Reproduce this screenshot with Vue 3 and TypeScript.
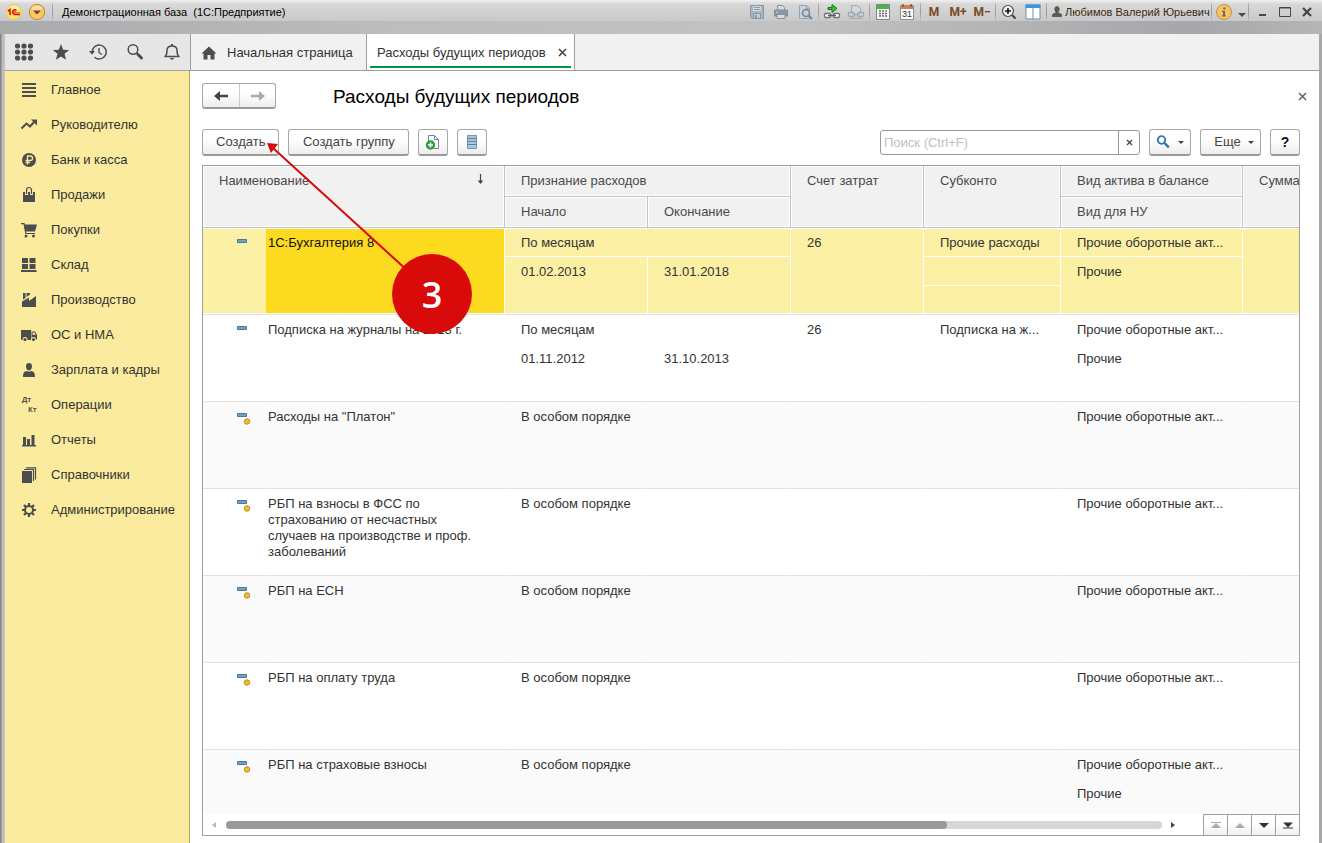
<script setup lang="ts">
import { ref } from 'vue'

interface Entry {
  name: string
  special: boolean
  method: string
  start?: string
  end?: string
  account?: string
  sub?: string
  kind: string
  tax?: string
}

const menu = [
  'Главное', 'Руководителю', 'Банк и касса', 'Продажи', 'Покупки', 'Склад', 'Производство',
  'ОС и НМА', 'Зарплата и кадры', 'Операции', 'Отчеты', 'Справочники', 'Администрирование',
]

const asset = 'Прочие оборотные акт...'
const entries: Entry[] = [
  { name: '1С:Бухгалтерия 8', special: false, method: 'По месяцам', start: '01.02.2013', end: '31.01.2018', account: '26', sub: 'Прочие расходы', kind: asset, tax: 'Прочие' },
  { name: 'Подписка на журналы на 2013 г.', special: false, method: 'По месяцам', start: '01.11.2012', end: '31.10.2013', account: '26', sub: 'Подписка на ж...', kind: asset, tax: 'Прочие' },
  { name: 'Расходы на "Платон"', special: true, method: 'В особом порядке', kind: asset },
  { name: 'РБП на взносы в ФСС по страхованию от несчастных случаев на производстве и проф. заболеваний', special: true, method: 'В особом порядке', kind: asset },
  { name: 'РБП на ЕСН', special: true, method: 'В особом порядке', kind: asset },
  { name: 'РБП на оплату труда', special: true, method: 'В особом порядке', kind: asset },
  { name: 'РБП на страховые взносы', special: true, method: 'В особом порядке', kind: asset, tax: 'Прочие' },
]

const selected = ref(0)
const query = ref('')
</script>

<template>
  <div class="window">
    <header class="titlebar">
      <svg class="logo" width="16" height="16" viewBox="0 0 16 16">
        <circle cx="8" cy="8" r="7.500" fill="#fbe36a" stroke="#e9c95a" />
        <ellipse cx="8" cy="4.500" rx="5" ry="3" fill="#fdf2a8" />
        <path d="M2 7l2-1.500V11" fill="none" stroke="#d8140c" stroke-width="1.600" />
        <path d="M10.500 6.500A2.300 2.300 0 1 0 8.600 10.400H14" fill="none" stroke="#d8140c" stroke-width="1.500" />
        <path d="M9.600 7.800A.9.900 0 1 0 8.800 8.800H14" fill="none" stroke="#d8140c" stroke-width=".8" />
      </svg>
      <button class="plain" aria-label="Меню">
        <svg width="18" height="18" viewBox="0 0 18 18">
          <circle cx="9" cy="9" r="7.700" fill="#f8c763" stroke="#c08a38" />
          <ellipse cx="9" cy="5.500" rx="5.500" ry="3" fill="#fbdc9b" />
          <path d="M5 7.500h8L9 11.500z" fill="#6d4a14" />
        </svg>
      </button>
      <i class="sep"></i>
      <span class="caption">Демонстрационная база&nbsp; (1С:Предприятие)</span>
      <div class="sys">
        <button class="tool" aria-label="Сохранить">
          <svg width="16" height="16" viewBox="0 0 16 16"><path d="M1.500 1.500h13v13h-12l-1-1z" fill="#a9b5c0" stroke="#8796a4" /><path d="M4 2h8v5H4z" fill="#d3d9de" /><path d="M5 3.500h6M5 5.500h6" stroke="#8d9aa6" /><path d="M4.500 9.500h7v5h-7z" fill="#c5cdd4" stroke="#8796a4" /><path d="M6 11h2v3H6z" fill="#8796a4" /></svg>
        </button>
        <button class="tool" aria-label="Печать">
          <svg width="16" height="16" viewBox="0 0 16 16"><path d="M4.500 6V1.500h5l2 2V6" fill="#d6dadd" stroke="#8593a0" /><path d="M1.500 6h13v6h-13z" fill="#8c9aa8" stroke="#7f8e9b" /><path d="M4 10.500h8v4H4z" fill="#d9dde0" stroke="#8593a0" /><path d="M3 8h2" stroke="#c9d1d8" /></svg>
        </button>
        <button class="tool" aria-label="Предварительный просмотр">
          <svg width="16" height="16" viewBox="0 0 16 16"><path d="M2.500 1.500h7l3 3v10h-10z" fill="#ccd2d7" stroke="#97a5b1" /><path d="M9.500 1.500v3h3" fill="none" stroke="#97a5b1" /><circle cx="9" cy="9" r="3.500" fill="#c5d1da" stroke="#71879a" stroke-width="1.600" /><path d="M11.500 11.500l3.500 3.500" stroke="#71879a" stroke-width="2.200" /></svg>
        </button>
        <i class="sep"></i>
        <button class="tool" aria-label="Получить ссылку">
          <svg width="18" height="16" viewBox="0 0 18 16"><path d="M5 3h4V0l5 4-5 4V5H5z" transform="translate(0 .500)" fill="#35c22b" stroke="#187b18" /><rect x="1.500" y="9.500" width="6" height="4" rx="1" fill="#fff" stroke="#6c7379" stroke-width="1.300" /><rect x="10.500" y="9.500" width="6" height="4" rx="1" fill="#fff" stroke="#6c7379" stroke-width="1.300" /><path d="M5 11.500h8" stroke="#555d63" stroke-width="1.500" /></svg>
        </button>
        <button class="tool" aria-label="Перейти по ссылке">
          <svg width="18" height="16" viewBox="0 0 18 16"><path d="M4.500 9V1.500h6l3 3V9" fill="#d4d8dc" stroke="#a0abb5" /><rect x="1.500" y="8.500" width="6" height="4" rx="1" fill="#cdd3d8" stroke="#9da9b3" stroke-width="1.300" /><rect x="10.500" y="8.500" width="6" height="4" rx="1" fill="#cdd3d8" stroke="#9da9b3" stroke-width="1.300" /><path d="M5 10.500h8M3 14.500h12" stroke="#9da9b3" /></svg>
        </button>
        <i class="sep"></i>
        <button class="tool" aria-label="Калькулятор">
          <svg width="14" height="16" viewBox="0 0 14 16"><path d="M.5.500h13v15H.5z" fill="#f6f6f6" stroke="#7b8780" /><path d="M1 1h12v4H1z" fill="#45b649" /><path d="M3 7h2M6 7h2M3 9.500h2M6 9.500h2M3 12h2M6 12h2M9 9.500h2M9 12h2" stroke="#616e78" stroke-width="1.500" /><path d="M9 7h2" stroke="#e2533f" stroke-width="1.500" /></svg>
        </button>
        <button class="tool" aria-label="Календарь">
          <svg width="14" height="16" viewBox="0 0 14 16"><path d="M.5 1.500h13v14H.5z" fill="#fdfdfd" stroke="#8a8f96" /><path d="M1 1h12v4H1z" fill="#c98352" /><path d="M3 0v3M11 0v3" stroke="#8b5731" stroke-width="1.500" /><text x="7" y="13" text-anchor="middle" font-size="9" font-family="Liberation Sans, sans-serif" fill="#333">31</text></svg>
        </button>
        <i class="sep"></i>
        <button class="tool mem">M</button>
        <button class="tool mem">M+</button>
        <button class="tool mem">M−</button>
        <i class="sep"></i>
        <button class="tool" aria-label="Масштаб">
          <svg width="16" height="16" viewBox="0 0 16 16"><circle cx="7" cy="7" r="5.500" fill="#f7f7f7" stroke="#4a4a4a" stroke-width="1.200" /><path d="M4 7h6M7 4v6" stroke="#111" stroke-width="1.600" /><path d="M11 11l3.500 3.500" stroke="#444" stroke-width="2.200" /></svg>
        </button>
        <button class="tool" aria-label="Панели">
          <svg width="16" height="16" viewBox="0 0 16 16"><path d="M1 1h14v14H1z" fill="#fff" stroke="#6d8fae" /><path d="M.5.500h15v3.500H.5z" fill="#3d95dc" /><path d="M8 4v11" stroke="#6d8fae" /></svg>
        </button>
        <i class="sep"></i>
        <button class="user">
          <svg width="10" height="12" viewBox="0 0 10 12"><path d="M5 .5c3 0 2.500 4.500 1 5.500v1l3 1q.6.300.6 2.500H.4Q.4 8.300 1 8l3-1V6C2.500 5 2 .500 5 .500z" fill="#5b5b5b" stroke="#474747" stroke-width=".7" /></svg>
          Любимов Валерий Юрьевич
        </button>
        <i class="sep"></i>
        <button class="plain info" aria-label="Справка">
          <svg width="18" height="18" viewBox="0 0 18 18"><circle cx="9" cy="9" r="7.500" fill="#f6c263" stroke="#c3924b" /><path d="M8.300 4.500h2.200v2H8.300zM7 7.700h3v4.500h1v1.300H7v-1.300h1V9H7z" fill="#756a58" /></svg>
        </button>
        <button class="plain down" aria-label="Настройки">
          <svg width="10" height="8" viewBox="0 0 10 8"><path d="M1 3h8L5 7z" fill="#4c4c4c" /></svg>
        </button>
        <i class="sep gap"></i>
        <button class="wbtn" aria-label="Свернуть"><svg width="12" height="12" viewBox="0 0 12 12"><path d="M2 9h7" stroke="#454545" stroke-width="2" /></svg></button>
        <button class="wbtn" aria-label="Развернуть"><svg width="12" height="12" viewBox="0 0 12 12"><path d="M.5 1.500h11v9H.5z" fill="none" stroke="#454545" /><path d="M.5 2h11" stroke="#454545" /></svg></button>
        <button class="wbtn" aria-label="Закрыть"><svg width="12" height="12" viewBox="0 0 12 12"><path d="M2 2l8 8M10 2l-8 8" stroke="#454545" stroke-width="2.200" /></svg></button>
      </div>
    </header>

    <div class="tabs">
      <div class="quick">
        <button aria-label="Меню функций"><svg width="18" height="18" viewBox="0 0 18 18" fill="#4d4d4d"><template v-for="r in 3" :key="r"><circle v-for="c in 3" :key="c" :cx="c * 6.500 - 4" :cy="r * 6 - 3" r="2.600" /></template></svg></button>
        <button aria-label="Избранное"><svg width="18" height="18" viewBox="0 0 18 18"><path d="M9 1l2.200 5.700 6 .3-4.700 3.800 1.600 5.900L9 13.400l-5.100 3.300 1.600-5.900L.8 7l6-.3z" fill="#4d4d4d" /></svg></button>
        <button aria-label="История"><svg width="18" height="18" viewBox="0 0 18 18" fill="none" stroke="#4d4d4d"><path d="M3.200 9.500a7 7 0 1 1 2.300 4.700" stroke-width="1.500" /><path d="M10 5v4.500l3 2" stroke-width="1.400" /><path d="M0 8h6l-3 3.800z" fill="#4d4d4d" stroke="none" /></svg></button>
        <button aria-label="Поиск"><svg width="18" height="18" viewBox="0 0 18 18" fill="none" stroke="#4d4d4d"><circle cx="7" cy="6.500" r="4.800" stroke-width="1.500" /><path d="M10.500 10l1.500 1.500" stroke-width="1.600" /><path d="M12 11.500l3.500 3.500" stroke-width="3" stroke-linecap="round" /></svg></button>
        <button aria-label="Оповещения"><svg width="18" height="18" viewBox="0 0 18 18"><path d="M2 13.500c2-1.500 2-3 2-6 0-3 2-4.500 5-4.500s5 1.500 5 4.500c0 3 0 4.500 2 6z" fill="none" stroke="#4d4d4d" stroke-width="1.500" stroke-linejoin="round" /><path d="M8 1h2v2H8zM7 15h4c0 2-4 2-4 0z" fill="#4d4d4d" /></svg></button>
      </div>
      <a class="tab" href="#">
        <svg width="16" height="14" viewBox="0 0 16 14"><path d="M8 .5L.5 7.500h2V13.500H6.500V9h3v4.500h4V7.500h2z" fill="#4d4d4d" /></svg>
        Начальная страница
      </a>
      <a class="tab active" href="#">
        Расходы будущих периодов
        <svg width="9" height="9" viewBox="0 0 9 9"><path d="M1 1l7 7M8 1L1 8" stroke="#444" stroke-width="1.600" /></svg>
      </a>
    </div>

    <div class="body">
      <nav class="side">
        <a v-for="(m, i) in menu" :key="m" href="#">
          <svg width="16" height="16" viewBox="0 0 16 16" fill="#4d4d4d">
            <path v-if="i === 0" d="M1 1h14v2H1zM1 5h14v2H1zM1 9h14v2H1zM1 13h14v2H1z" />
            <g v-else-if="i === 1"><path d="M.5 11.500l5-5 3.500 3 4.500-5" fill="none" stroke="#4d4d4d" stroke-width="2" /><path d="M10 2.500h6v6z" /></g>
            <g v-else-if="i === 2"><circle cx="8" cy="8" r="7" /><path d="M6.500 12.500V4h2.800a2.200 2.200 0 0 1 0 4.500H4.500M4.500 10.500H9" fill="none" stroke="#faeb9e" stroke-width="1.300" /></g>
            <g v-else-if="i === 3"><path d="M2 5h12v10H2z" /><path d="M5.500 8V3.500q0-3 2.500-3t2.500 3V8" fill="none" stroke="#faeb9e" stroke-width="3" /><path d="M5.500 7V3.500q0-3 2.500-3t2.500 3V7" fill="none" stroke="#4d4d4d" stroke-width="1.200" /></g>
            <g v-else-if="i === 4"><path d="M0 1h3.500l.4 1.500H16L14 9.500H5l.3 1.500H14v1H4.300L2.500 2.200H0z" /><circle cx="5" cy="14" r="1.500" /><circle cx="12.500" cy="14" r="1.500" /></g>
            <path v-else-if="i === 5" d="M1 1h6v5H1zM8.500 1h6v5h-6zM1 7h6v5H1zM8.500 7h6v5h-6zM0 13h15.500v2H0z" />
            <path v-else-if="i === 6" d="M1 15V9.500l7-4v3.500l7-5V15zM2 1h2.500v5L2 7.500zM5.500 1H9v1.500L5.500 5z" />
            <g v-else-if="i === 7"><path d="M0 3h10v10H0zM10.500 4.500h3.500L16 8v4.500h-5.500z" /><path d="M11.500 5.500h2l1.200 2.300h-3.200z" fill="#faeb9e" /><circle cx="4" cy="12.500" r="2.500" fill="#faeb9e" /><circle cx="12.500" cy="12.500" r="2.500" fill="#faeb9e" /><circle cx="4" cy="12.500" r="1.600" /><circle cx="12.500" cy="12.500" r="1.600" /></g>
            <path v-else-if="i === 8" d="M8 1c2.200 0 3.200 1.500 3 3.700C10.800 7 9.500 8.500 8 8.500S5.200 7 5 4.700C4.800 2.500 5.800 1 8 1zM2 15c0-4 1-5.500 4-6q2 1.300 4 0c3 .5 4 2 4 6z" />
            <g v-else-if="i === 9" font-family="Open Sans, sans-serif" font-weight="700" font-size="7"><text x="1" y="5">Дт</text><text x="7" y="15">Кт</text></g>
            <path v-else-if="i === 10" d="M1 13h14v1.500H1zM2 5h3v8H2zM6 7h3v6H6zM10.500 3h3v10h-3z" />
            <g v-else-if="i === 11"><path d="M1 4h10v12H1z" /><path d="M3 2.500h9.500V14M5 .8h9.500V12.500" fill="none" stroke="#4d4d4d" stroke-width="1.200" /></g>
            <g v-else><circle cx="8" cy="8" r="4" fill="none" stroke="#4d4d4d" stroke-width="2" /><path d="M8 1v3M8 12v3M1 8h3M12 8h3M3 3l2.200 2.200M10.800 10.800L13 13M13 3l-2.200 2.200M5.200 10.800L3 13" stroke="#4d4d4d" stroke-width="2.200" /></g>
          </svg>
          {{ m }}
        </a>
      </nav>

      <main class="page">
        <div class="heading">
          <div class="history">
            <button aria-label="Назад"><svg width="16" height="12" viewBox="0 0 16 12"><path d="M1 6l6-5v3.800h8v2.400H7V11z" fill="#444" /></svg></button>
            <button aria-label="Вперед"><svg width="16" height="12" viewBox="0 0 16 12"><path d="M15 6L9 1v3.800H1v2.400h8V11z" fill="#aaa" /></svg></button>
          </div>
          <h1>Расходы будущих периодов</h1>
          <button class="close" aria-label="Закрыть форму"><svg width="9" height="9" viewBox="0 0 9 9"><path d="M1 1l7 7M8 1L1 8" stroke="#555" stroke-width="1.300" /></svg></button>
        </div>

        <div class="commands">
          <button class="btn">Создать</button>
          <button class="btn group">Создать группу</button>
          <button class="btn icon" aria-label="Скопировать">
            <svg width="16" height="16" viewBox="0 0 16 16"><path d="M3.500 7V1.500h6l4 4v9H9" fill="#fff" stroke="#71869a" /><path d="M9.500 1.500v4h4" fill="none" stroke="#71869a" /><circle cx="5.500" cy="11" r="4.700" fill="#2c9c3c" /><path d="M3 11h5M5.500 8.500v5" stroke="#fff" stroke-width="1.500" /></svg>
          </button>
          <button class="btn icon" aria-label="Режим просмотра">
            <svg width="12" height="16" viewBox="0 0 12 16"><path d="M1.500 1.500h9v13h-9z" fill="#a9c6da" stroke="#7796ad" /><path d="M1 4.500h10M1 7.500h10M1 10.500h10" stroke="#5f86a4" /></svg>
          </button>
          <div class="search">
            <input v-model="query" type="text" aria-label="Поиск" placeholder="Поиск (Ctrl+F)" />
            <button aria-label="Очистить" @click="query = ''"><svg width="7" height="7" viewBox="0 0 7 7"><path d="M1 1l5 5M6 1L1 6" stroke="#444" stroke-width="1.200" /></svg></button>
          </div>
          <button class="btn find" aria-label="Найти">
            <svg width="14" height="14" viewBox="0 0 14 14" fill="none" stroke="#2d76ae"><circle cx="5.500" cy="5" r="3.800" stroke-width="1.800" /><path d="M8.500 8l4.300 4.300" stroke-width="2.400" /></svg>
            <svg width="6" height="3" viewBox="0 0 6 3"><path d="M0 0h6L3 3z" fill="#444" /></svg>
          </button>
          <button class="btn more">Еще <svg width="6" height="3" viewBox="0 0 6 3"><path d="M0 0h6L3 3z" fill="#444" /></svg></button>
          <button class="btn help">?</button>
        </div>

        <section class="list">
          <div class="viewport">
            <table>
              <colgroup><col class="c-icon" /><col class="c-name" /><col class="c-date" /><col class="c-date" /><col class="c-acc" /><col class="c-sub" /><col class="c-kind" /><col /></colgroup>
              <thead>
                <tr>
                  <th colspan="2" rowspan="2"><span class="sorted">Наименование <svg width="7" height="12" viewBox="0 0 7 12"><path d="M3.500 1v9" stroke="#444" stroke-width="1.200" /><path d="M.7 7.500h5.600L3.500 11z" fill="#444" /></svg></span></th>
                  <th colspan="2">Признание расходов</th>
                  <th rowspan="2">Счет затрат</th>
                  <th rowspan="2">Субконто</th>
                  <th>Вид актива в балансе</th>
                  <th rowspan="2">Сумма</th>
                </tr>
                <tr><th>Начало</th><th>Окончание</th><th>Вид для НУ</th></tr>
              </thead>
              <tbody v-for="(e, i) in entries" :key="e.name" :class="{ selected: i === selected }" @click="selected = i">
                <tr>
                  <td rowspan="3" class="mark end">
                    <svg width="14" height="14" viewBox="0 0 14 14"><path d="M.5 1.500h9v3h-9z" fill="#6fa3c8" stroke="#4c7796" /><circle v-if="e.special" cx="10" cy="9.500" r="2.700" fill="#f3c02c" stroke="#b98a1c" /></svg>
                  </td>
                  <td rowspan="3" class="name end">{{ e.name }}</td>
                  <td colspan="2" class="top">{{ e.method }}</td>
                  <td rowspan="3" class="top end">{{ e.account }}</td>
                  <td class="top">{{ e.sub }}</td>
                  <td class="top">{{ e.kind }}</td>
                  <td rowspan="3" class="top end"></td>
                </tr>
                <tr>
                  <td rowspan="2" class="end">{{ e.start }}</td>
                  <td rowspan="2" class="end">{{ e.end }}</td>
                  <td></td>
                  <td rowspan="2" class="end">{{ e.tax }}</td>
                </tr>
                <tr><td class="end"></td></tr>
              </tbody>
            </table>
          </div>
          <footer class="scroll">
            <svg width="6" height="8" viewBox="0 0 6 8"><path d="M5 1v6L1 4z" fill="#bbb" /></svg>
            <div class="track"><div class="thumb"></div></div>
            <svg width="6" height="8" viewBox="0 0 6 8"><path d="M1 1v6l4-3z" fill="#444" /></svg>
            <div class="jump">
              <button aria-label="В начало"><svg width="10" height="8" viewBox="0 0 10 8"><path d="M0 1.500h10" stroke="#aaa" /><path d="M5 2l5 5H0z" fill="#aaa" /></svg></button>
              <button aria-label="Вверх"><svg width="10" height="8" viewBox="0 0 10 8"><path d="M5 2l5 5H0z" fill="#aaa" /></svg></button>
              <button aria-label="Вниз"><svg width="10" height="8" viewBox="0 0 10 8"><path d="M5 7L0 2h10z" fill="#333" /></svg></button>
              <button aria-label="В конец"><svg width="10" height="8" viewBox="0 0 10 8"><path d="M5 6.500L0 1.500h10z" fill="#333" /><path d="M0 7h10" stroke="#333" /></svg></button>
            </div>
          </footer>
        </section>
      </main>
    </div>

    <svg class="callout" width="480" height="340" viewBox="0 0 480 340">
      <path d="M273 148L432 293" stroke="#d80a0a" stroke-width="2" />
      <path d="M267 143l11 1-7 9z" fill="#d80a0a" />
      <circle cx="432" cy="294" r="40" fill="#d80a0a" />
      <text x="432" y="308" text-anchor="middle">3</text>
    </svg>
  </div>
</template>

<style>
html, body, #app { height: 100%; }
body { margin: 0; }
</style>

<style scoped>
* { box-sizing: border-box; }
.window {
  position: relative;
  display: flex;
  flex-direction: column;
  height: 100%;
  padding: 0 3px 0 5px;
  overflow: hidden;
  background: linear-gradient(90deg, #858585 1px, #bcbcbc 2px, #c2c2c2 5px, #b5b5b5 50%, #a8a8a8);
  color: #333;
  font: 13px/16px "Liberation Sans", Arial, sans-serif;
}
button { margin: 0; padding: 0; border: 0; background: none; color: inherit; font: inherit; }
svg { display: block; flex: none; }
a { color: inherit; text-decoration: none; }

.titlebar {
  display: flex;
  align-items: center;
  flex: none;
  height: 34px;
  margin: 0 -3px 0 -5px;
  padding: 1px 4px 11px 6px;
  background: linear-gradient(#f0f0f0 0, #d8d8d8 4px, #c9c9c9 21px, transparent 21px), linear-gradient(90deg, #a9aaae, #bdbdbd 30%, #c2c2c2 60%, #a6a7ab 90%, #b5b5b5);
  font: 11px/14px "Liberation Sans", Arial, sans-serif;
}
.plain { display: flex; }
.titlebar > .plain { margin: 0 5px 0 6px; }
.sep { flex: none; width: 1px; height: 18px; margin: 0 1px; background: linear-gradient(#b4b4b4, #989898, #c4c4c4); }
.caption { margin-left: 8px; color: #000; white-space: nowrap; }
.sys { display: flex; align-items: center; margin-left: auto; }
.tool { display: flex; align-items: center; justify-content: center; width: 24px; height: 22px; }
.mem { color: #7c4a22; font-family: Roboto, sans-serif; font-size: 12px; font-weight: 700; }
.user { display: flex; align-items: center; gap: 3px; width: 162px; padding-left: 4px; color: #3d2a10; white-space: nowrap; }
.info { margin: 0 4px 0 2px; }
.down { padding-top: 4px; }
.gap { margin-right: 3px; }
.wbtn { display: flex; align-items: center; justify-content: center; width: 22px; height: 22px; }

.tabs { display: flex; flex: none; height: 37px; border-bottom: 1px solid #a0a0a0; background: #f1f1f1; }
.quick { display: flex; flex: none; width: 186px; background: #e6e6e6; border-right: 1px solid #a0a0a0; }
.quick button { display: flex; flex: 1; align-items: center; justify-content: center; }
.tab { display: flex; align-items: center; gap: 10px; width: 176px; padding: 1px 0 0 10px; border-right: 1px solid #a0a0a0; white-space: nowrap; }
.tab.active { justify-content: space-between; width: 208px; padding: 1px 7px 0 10px; background: linear-gradient(#009646, #009646) center 32px / calc(100% - 6px) 2px no-repeat #fff; }

.body { display: flex; flex: 1; min-height: 0; }
.side { flex: none; width: 185px; padding-top: 1px; background: #faeb9e; border-right: 1px solid #b8a53c; }
.side a { display: flex; align-items: center; gap: 14px; height: 35px; padding-left: 16px; }
.side svg { overflow: visible; }
.page { display: flex; flex-direction: column; flex: 1; min-width: 0; padding: 12px 19px 7px 12px; background: #fff; }

.heading { display: flex; align-items: center; height: 26px; }
.history { display: flex; height: 26px; border: 1px solid #a8a8a8; border-bottom: 2px solid #9a9a9a; border-radius: 3px; background: linear-gradient(#fff 40%, #ededed); }
.history button { display: flex; align-items: center; justify-content: center; width: 36px; }
.history button + button { border-left: 1px solid #ccc; }
h1 { margin: 0 auto 0 57px; padding-top: 2px; color: #000; font-size: 19px; font-weight: 400; line-height: 24px; }
.close { margin-right: -7px; padding: 0; }

.commands { display: flex; align-items: center; gap: 9px; margin: 20px 0 9px; }
.btn { display: flex; align-items: center; justify-content: center; height: 27px; padding: 0 13px; border: 1px solid #a8a8a8; border-bottom: 2px solid #9a9a9a; border-radius: 3px; background: linear-gradient(#fff 40%, #ededed); color: #444; white-space: nowrap; }
.group { width: 121px; padding: 0; }
.icon, .help { width: 30px; padding: 0; }
.search { display: flex; flex: none; width: 260px; height: 25px; margin-left: auto; border: 1px solid #999; border-radius: 3px; }
.search input { flex: 1; min-width: 0; padding: 0 3px; border: 0; outline: 0; background: none; color: #333; font: inherit; }
.search input::placeholder { color: #c0c0c0; opacity: 1; }
.search button { display: flex; align-items: center; justify-content: center; width: 21px; border-left: 1px solid #999; }
.find { gap: 8px; width: 42px; padding: 0; }
.more { gap: 7px; width: 61px; padding: 0 0 0 7px; }
.help { color: #111; font-size: 14px; font-weight: 700; }

.list { display: flex; flex-direction: column; flex: 1; min-height: 0; border: 1px solid #a0a0a0; }
.viewport { flex: 1; min-height: 0; overflow: hidden; }
table { width: 110%; table-layout: fixed; border-spacing: 0; }
.c-icon { width: 63px; }
.c-name { width: 239px; }
.c-date { width: 143px; }
.c-acc { width: 133px; }
.c-sub { width: 137px; }
.c-kind { width: 182px; }
th { height: 31px; padding: 7px 16px 0; border: 0 solid #c4c4c4; border-width: 0 1px 1px 0; background: #f1f1f1; box-shadow: inset 0 0 0 1px #fff; color: #4a4a4a; font-weight: 400; text-align: left; vertical-align: top; white-space: nowrap; }
.sorted { display: flex; justify-content: space-between; padding-right: 4px; }
td { height: 29px; padding: 7px 0 0 16px; border: 0 solid transparent; border-width: 0 1px 1px 0; vertical-align: top; white-space: nowrap; }
tbody:nth-of-type(odd) { background: #fafafa; }
td.end { border-bottom-color: #e2e2e2; }
td.mark { padding: 10px 0 0 34px; }
td.name { padding: 7px 30px 0 2px; white-space: normal; }
.selected td { border-color: #fff; background: #fcf0a4; }
.selected td.top, .selected td.mark, .selected td.name { box-shadow: inset 0 1px #fff; }
.selected td.end { border-bottom-color: #e2e2e2; box-shadow: inset 0 -1px #fff; }
.selected td.top.end, .selected td.mark.end, .selected td.name.end { box-shadow: inset 0 1px #fff, inset 0 -1px #fff; }
.selected td.mark { border-right-color: #fcf0a4; }
.selected td.name { background: #fbda20; color: #111; }

.scroll { display: flex; align-items: center; flex: none; height: 21px; padding-left: 8px; background: #fff; }
.track { flex: 1; height: 8px; margin: 0 8px 0 9px; border-radius: 4px; background: #d6d6d6; }
.thumb { width: 77%; height: 8px; border-radius: 4px; background: #999; }
.jump { display: flex; height: 21px; margin-left: 27px; border-top: 1px solid #a0a0a0; }
.jump button { display: flex; align-items: center; justify-content: center; width: 24px; border-left: 1px solid #a0a0a0; background: linear-gradient(#fff 40%, #f0f0f0); }

.callout { position: absolute; top: 0; left: 0; pointer-events: none; }
.callout text { fill: #fff; font: 600 36px "Open Sans", sans-serif; }
</style>
